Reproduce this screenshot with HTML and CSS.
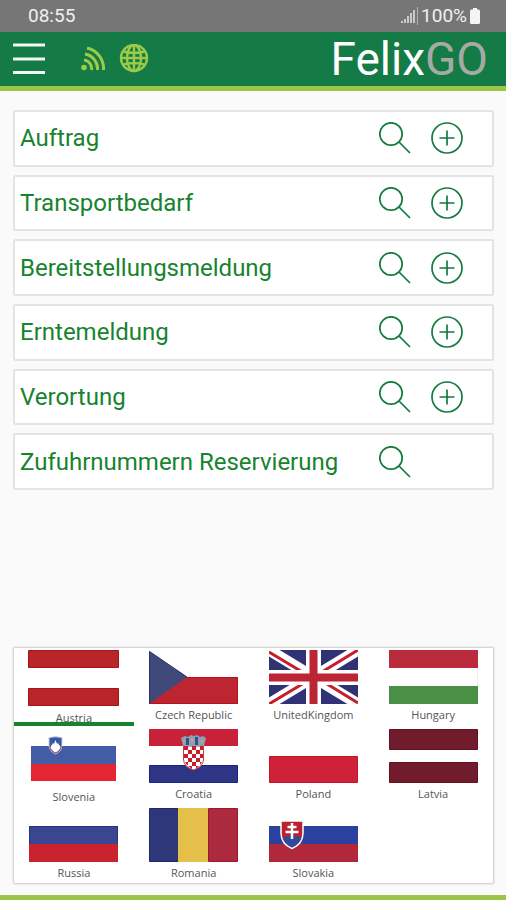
FILE: index.html
```html
<!DOCTYPE html>
<html lang="de">
<head>
<meta charset="utf-8">
<meta name="viewport" content="width=device-width, initial-scale=1">
<title>FelixGO</title>
<link rel="stylesheet" href="styles.css">
</head>
<body>
<svg class="defs" aria-hidden="true">
  <symbol id="search" viewBox="0 0 32 32"><circle cx="12" cy="12" r="11.2"/><path d="M20 20 L31 31"/></symbol>
  <symbol id="plus" viewBox="0 0 32 32"><circle cx="16" cy="16" r="15"/><path d="M16 8.500V23.500M8.500 16H23.500"/></symbol>
</svg>

<div class="status">
  <span>08:55</span>
  <div class="status-right">
    <svg class="signal" viewBox="0 0 17 18"><path d="M1 14v2M4 12v4M7 9v7M10 6v10M13 3v13"/><path class="divider" d="M16.500 0v18"/></svg>
    <span>100%</span>
    <svg class="battery" viewBox="0 0 10 16"><path d="M3 0h4v1.500h1.500q1.500 0 1.500 1.500v11.500q0 1.500-1.500 1.500h-7q-1.500 0-1.500-1.500V3q0-1.500 1.500-1.500H3z"/></svg>
  </div>
</div>

<header class="header">
  <button class="icon-button menu" aria-label="Menü"><svg viewBox="0 0 32 32"><path d="M0 2h32M0 16h32M0 29.500h32"/></svg></button>
  <svg class="feed" viewBox="0 0 25 25"><circle cx="3" cy="20.500" r="2.800"/><path d="M3 13A8.500 8.500 0 0 1 10.500 23M4 7A15 15 0 0 1 16.500 23M6 1A21 21 0 0 1 22.500 23"/></svg>
  <svg class="globe" viewBox="0 0 30 30"><circle cx="15" cy="14" r="13"/><ellipse cx="15" cy="14" rx="7" ry="13"/><path d="M15 1v26M2 14h26M4.500 7.500q10.500 3 21 0M4.500 20.500q10.500-3 21 0"/></svg>
  <h1 class="brand">Felix<span>GO</span></h1>
</header>

<main class="main">
  <ul class="list">
    <li class="row"><span>Auftrag</span><button class="icon-button" aria-label="Auftrag suchen"><svg><use href="#search"/></svg></button><button class="icon-button" aria-label="Auftrag anlegen"><svg><use href="#plus"/></svg></button></li>
    <li class="row"><span>Transportbedarf</span><button class="icon-button" aria-label="Transportbedarf suchen"><svg><use href="#search"/></svg></button><button class="icon-button" aria-label="Transportbedarf anlegen"><svg><use href="#plus"/></svg></button></li>
    <li class="row"><span>Bereitstellungsmeldung</span><button class="icon-button" aria-label="Bereitstellungsmeldung suchen"><svg><use href="#search"/></svg></button><button class="icon-button" aria-label="Bereitstellungsmeldung anlegen"><svg><use href="#plus"/></svg></button></li>
    <li class="row"><span>Erntemeldung</span><button class="icon-button" aria-label="Erntemeldung suchen"><svg><use href="#search"/></svg></button><button class="icon-button" aria-label="Erntemeldung anlegen"><svg><use href="#plus"/></svg></button></li>
    <li class="row"><span>Verortung</span><button class="icon-button" aria-label="Verortung suchen"><svg><use href="#search"/></svg></button><button class="icon-button" aria-label="Verortung anlegen"><svg><use href="#plus"/></svg></button></li>
    <li class="row"><span>Zufuhrnummern Reservierung</span><button class="icon-button" aria-label="Zufuhrnummern Reservierung suchen"><svg><use href="#search"/></svg></button></li>
  </ul>

  <div class="countries">
    <button class="country selected">
      <svg class="flag tall" viewBox="0 0 91 57"><g fill="#b92629" stroke="#a81216"><path d="M.5.5h90v17h-90zM.5 38.500h90v17h-90z"/></g></svg>
      <span>Austria</span>
    </button>
    <button class="country">
      <svg class="flag" viewBox="0 0 89 54"><path fill="#bd2630" d="M0 27h89v27H0z"/><path fill="none" stroke="#b5121b" d="M37 27.500h51.500v26H1"/><path fill="#41497b" d="M0 1l38 26L0 54z"/><path fill="none" stroke="#26306f" d="M.5 53V1.500L38 27"/></svg>
      <span>Czech Republic</span>
    </button>
    <button class="country">
      <svg class="flag" viewBox="0 0 89 54"><path fill="#2f3274" d="M0 0h89v54H0z"/><path stroke="#fff" stroke-width="11" d="M0 0l89 54M89 0L0 54"/><path stroke="#c41f2b" stroke-width="3" d="M0 2l40 24M89 0L48 25M89 53L50 29M0 54l40-24"/><path stroke="#fff" stroke-width="15" d="M44.500 0v54M0 27.500h89"/><path stroke="#bd2535" stroke-width="8" d="M44.500 0v54M0 27.500h89"/></svg>
      <span>UnitedKingdom</span>
    </button>
    <button class="country">
      <svg class="flag" viewBox="0 0 89 54"><path fill="#b92b3c" d="M0 0h89v18H0z"/><path fill="#4a8f46" d="M0 36h89v18H0z"/><path fill="none" stroke="#eee" d="M88.500 18v18"/></svg>
      <span>Hungary</span>
    </button>

    <button class="country">
      <svg class="flag tall" viewBox="-1 0 91 57"><path fill="#425da6" d="M2 17h85v18H2z"/><path fill="#e32631" d="M2 35h85v17H2z"/><path fill="#3957a3" stroke="#c8cfe2" d="M20 8.500q6.500-1.500 13 0v7q0 7-6.500 9.500-6.500-2.500-6.500-9.500z"/><path fill="none" stroke="#c44961" d="M20.500 17q1 5.500 6 7.500 5-2 6-7.500"/><path fill="#fff" d="M21.500 18l2.500-4 1 1 1.500-4 1.500 4 1-1 2.500 4q-1 3.500-5 5.500-4-2-5-5.500z"/></svg>
      <span>Slovenia</span>
    </button>
    <button class="country">
      <svg class="flag" viewBox="0 0 89 54"><path fill="#c72239" d="M0 0h89v17H0z"/><path fill="#2e3585" stroke="#1a2385" d="M.5 36.500h88v17H.5z"/><path fill="#fff" stroke="#c83b42" d="M34.500 17h20v13q0 8-10 11-10-3-10-11z"/><path fill="#c71e2b" d="M35 17h4v4h-4zM43 17h4v4h-4zM51 17h3v4h-3zM39 21h4v4h-4zM47 21h4v4h-4zM35 25h4v4h-4zM43 25h4v4h-4zM51 25h3v4h-3zM39 29h4v4h-4zM47 29h4v4h-4zM36 33h3v3h-1zM43 33h4v4h-4zM51 33h2l-2 3zM39 37h4v3zM47 37h3l-3 3z"/><path fill="#8ba0b8" d="M32 9l4-2 3 1 3-2 3 1 3-1 3 2 3-1 3 2-2 8H34z"/><path fill="#31508c" d="M37 9h3v7h-3zM46 8h3v8h-3z"/><path fill="#c9a65c" d="M42 9h2v4h-2zM52 11h2v3h-2zM34 11h2v2h-2z"/></svg>
      <span>Croatia</span>
    </button>
    <button class="country">
      <svg class="flag" viewBox="0 0 89 54"><path fill="#cf2238" stroke="#c71328" d="M.5 27.500h88v26H.5z"/></svg>
      <span>Poland</span>
    </button>
    <button class="country">
      <svg class="flag" viewBox="0 0 89 54"><path fill="#701c2d" stroke="#651020" d="M.5.5h88v20H.5zM.5 33.500h88v20H.5z"/></svg>
      <span>Latvia</span>
    </button>

    <button class="country">
      <svg class="flag" viewBox="0 0 89 54"><path fill="#3b4691" d="M0 18h89v18H0z"/><path fill="#cb2230" d="M0 36h89v18H0z"/><path fill="none" stroke="#20358b" d="M.5 36V18.500h88V36"/></svg>
      <span>Russia</span>
    </button>
    <button class="country">
      <svg class="flag" viewBox="0 0 89 54"><path fill="#2e3777" stroke="#1b2873" d="M.5.5h29v53H.5z"/><path fill="#e4c04b" d="M29 0h30v54H29z"/><path fill="#ab2a3d" stroke="#a51428" d="M59.500.5h29v53h-29z"/></svg>
      <span>Romania</span>
    </button>
    <button class="country">
      <svg class="flag" viewBox="0 0 89 54"><path fill="#2a419d" d="M0 18h89v18H0z"/><path fill="#b1283b" d="M0 36h89v18H0z"/><path fill="#b9212f" stroke="#fff" stroke-width="1.500" d="M12 13h22v12q0 11-11 15.500Q12 36 12 25z"/><path fill="#2f4ba0" d="M14 31q2-4 5-2 4-5 8 0 3-2 5 2-2 5-9 8.500-7-3.500-9-8.500z"/><path fill="none" stroke="#fff" stroke-width="2.500" d="M23 15v16M18.500 19h9M16.500 24h13"/></svg>
      <span>Slovakia</span>
    </button>
  </div>
</main>
<footer class="footer"></footer>
</body>
</html>
```
FILE: styles.css
```css
* {
  box-sizing: border-box;
}

body {
  margin: 0;
  min-height: 100vh;
  display: flex;
  flex-direction: column;
  background: #fafafa;
  font-family: Roboto, "Liberation Sans", sans-serif;
}

.defs {
  position: absolute;
  width: 0;
  height: 0;
}

.status {
  display: flex;
  justify-content: space-between;
  align-items: center;
  height: 32px;
  padding: 0 26px 0 28px;
  background: #767676;
  color: #f0f0f0;
  font-size: 19px;
  line-height: 32px;
}

.status-right {
  display: flex;
  align-items: center;
  gap: 3px;
}

.signal {
  width: 17px;
  height: 18px;
  fill: none;
  stroke: #e6e6e6;
  stroke-width: 1.5;
}

.divider {
  stroke: #b0b0b0;
  stroke-width: 1;
}

.battery {
  width: 10px;
  height: 16px;
  fill: #f4f4f4;
}

.header {
  display: flex;
  align-items: center;
  height: 59px;
  padding: 0 18px 0 13px;
  background: #147a46;
  border-bottom: 5px solid #9bc546;
}

.icon-button {
  display: block;
  width: 32px;
  height: 32px;
  padding: 0;
  border: 0;
  background: none;
  cursor: pointer;
}

.icon-button svg {
  display: block;
  width: 32px;
  height: 32px;
  fill: none;
  stroke: #147a40;
  stroke-width: 1.7;
}

.icon-button.menu svg {
  stroke: #f4faf2;
  stroke-width: 3;
}

.feed {
  width: 25px;
  height: 25px;
  margin-left: 36px;
  fill: none;
  stroke: #9bcb47;
  stroke-width: 3;
}

.feed circle {
  fill: #9bcb47;
  stroke: none;
}

.globe {
  width: 30px;
  height: 30px;
  margin-left: 13px;
  fill: none;
  stroke: #9bcb47;
  stroke-width: 2.4;
}

.brand {
  margin: 0 0 0 auto;
  color: #fff;
  font-size: 46px;
  font-weight: 400;
  line-height: 54px;
}

.brand span {
  color: #a5aaa5;
}

.main {
  flex: 1;
  display: flex;
  flex-direction: column;
  justify-content: space-between;
  gap: 24px;
  padding: 19px 12px 11px 13px;
}

.list {
  display: grid;
  grid-auto-rows: 1fr;
  gap: 8px;
  min-height: 380px;
  margin: 0;
  padding: 0;
  list-style: none;
}

.row {
  display: grid;
  grid-template-columns: 1fr 32px 32px;
  align-items: center;
  gap: 20px;
  padding: 0 29px 0 5px;
  border: 2px solid #e4e4e4;
  border-radius: 2px;
  background: #fff;
  color: #17832f;
  font-size: 24px;
  line-height: 28px;
}

.row span {
  white-space: nowrap;
}

.countries {
  display: grid;
  grid-template-columns: repeat(4, 1fr);
  grid-auto-rows: 76px;
  row-gap: 3px;
  padding-bottom: 1px;
  border: 1px solid #d6d6d6;
  border-radius: 2px;
  box-shadow: 0 0 0 1px #ececec;
  background: #fff;
}

.country {
  position: relative;
  display: flex;
  flex-direction: column;
  align-items: center;
  gap: 3px;
  padding: 2px 0 0;
  border: 0;
  background: none;
  color: #555;
  font-family: "Open Sans", "Noto Sans", sans-serif;
  font-size: 11px;
  line-height: 16px;
  cursor: pointer;
}

.selected::after {
  content: "";
  position: absolute;
  right: 0;
  bottom: -2px;
  left: 0;
  height: 4px;
  background: #17832f;
}

.flag {
  flex: none;
  width: 89px;
  height: 54px;
}

.flag.tall {
  width: 91px;
  height: 57px;
}

.footer {
  height: 5px;
  background: #9bc546;
}
```
